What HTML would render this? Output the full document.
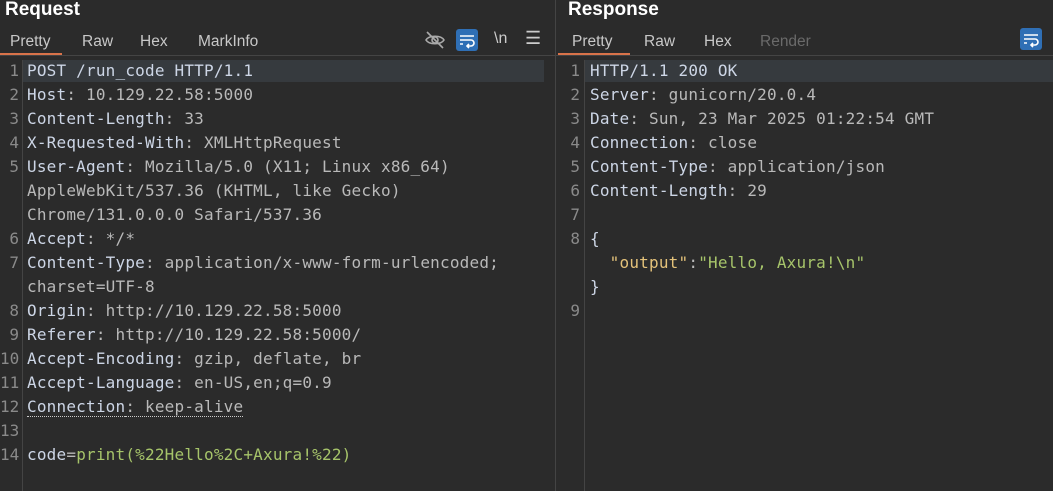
<!DOCTYPE html>
<html><head><style>
body{margin:0;width:1053px;height:491px;background:#2b2b2b;overflow:hidden;font-family:"Liberation Sans",sans-serif;color:#ddd;position:relative}
.panel{position:absolute;top:0;height:491px}
.title{position:absolute;top:-1px;font-weight:bold;font-size:19px;color:#fff}
.tabs{position:absolute;top:33px;font-size:15.5px;color:#c8c8c8}
.tabs span{position:absolute;white-space:nowrap}
.sep{position:absolute;top:55px;height:1px;background:#444}
.ul{position:absolute;top:53px;height:2px;background:#d9734a}
.code{position:absolute;font-family:"DejaVu Sans Mono",monospace;font-size:16px;letter-spacing:0.2px;line-height:24px;white-space:pre;color:#b9b9b9}
.ln{position:absolute;font-family:"DejaVu Sans Mono",monospace;font-size:16px;line-height:24px;color:#8a8a8a;text-align:right;white-space:pre}
.k{color:#cdd6e6}.g{color:#a6c46a}.y{color:#e4c27a}
.gut{position:absolute;top:60px;width:1px;height:431px;background:#444}
.ic{position:absolute}
</style></head><body>
<div class="panel" style="left:0;width:555px">
<div class="title" style="left:5px">Request</div>
<div class="tabs"><span style="left:10px">Pretty</span><span style="left:82px">Raw</span><span style="left:140px">Hex</span><span style="left:198px">MarkInfo</span></div>
<div class="sep" style="left:0;width:555px"></div>
<div class="ul" style="left:0;width:62px"></div>
<svg class="ic" style="left:424px;top:29px" width="22" height="22" viewBox="0 0 22 22" fill="none" stroke="#aaa" stroke-width="1.6"><path d="M2 11c3-5 15-5 18 0c-3 5-15 5-18 0z"/><circle cx="11" cy="11" r="3"/><path d="M3 3l16 16"/></svg>
<div class="ic" style="left:456px;top:29px;width:22px;height:22px;background:#2f6fb5;border-radius:3px"></div>
<svg class="ic" style="left:456px;top:29px" width="22" height="22" viewBox="0 0 22 22" fill="none" stroke="#fff" stroke-width="1.6"><path d="M4 7h14M4 11h11a3 3 0 0 1 0 6h-4M13 15l-2 2 2 2M4 15h3"/></svg>
<div class="ic" style="left:494px;top:30px;font-size:16px;color:#ccc">\n</div>
<div class="ic" style="left:525px;top:28px;font-size:18px;color:#ccc">☰</div>
<div style="position:absolute;left:23px;top:60px;width:521px;height:22px;background:#363a3e"></div>
<div class="gut" style="left:22px"></div>
<div class="ln" style="left:0;top:59px;width:19px">1
2
3
4
5


6
7

8
9
10
11
12
13
14</div>
<div class="code" style="left:27px;top:59px"><span class="k">POST /run_code HTTP/1.1</span>
<span class="k">Host</span>: 10.129.22.58:5000
<span class="k">Content-Length</span>: 33
<span class="k">X-Requested-With</span>: XMLHttpRequest
<span class="k">User-Agent</span>: Mozilla/5.0 (X11; Linux x86_64)
AppleWebKit/537.36 (KHTML, like Gecko)
Chrome/131.0.0.0 Safari/537.36
<span class="k">Accept</span>: */*
<span class="k">Content-Type</span>: application/x-www-form-urlencoded;
charset=UTF-8
<span class="k">Origin</span>: http://10.129.22.58:5000
<span class="k">Referer</span>: http://10.129.22.58:5000/
<span class="k">Accept-Encoding</span>: gzip, deflate, br
<span class="k">Accept-Language</span>: en-US,en;q=0.9
<span class="k" style="border-bottom:1px dotted #ccc">Connection</span><span style="border-bottom:1px dotted #ccc">: keep-alive</span>

<span class="k">code</span>=<span class="g">print(%22Hello%2C+Axura!%22)</span></div>
</div>
<div style="position:absolute;left:555px;top:0;width:1px;height:491px;background:#444"></div>
<div class="panel" style="left:556px;width:497px">
<div class="title" style="left:12px">Response</div>
<div class="tabs"><span style="left:16px">Pretty</span><span style="left:88px">Raw</span><span style="left:148px">Hex</span><span style="left:204px;color:#6a6a6a">Render</span></div>
<div class="sep" style="left:0;width:497px"></div>
<div class="ul" style="left:2px;width:72px"></div>
<div class="ic" style="left:464px;top:28px;width:22px;height:22px;background:#2f6fb5;border-radius:3px"></div>
<svg class="ic" style="left:464px;top:28px" width="22" height="22" viewBox="0 0 22 22" fill="none" stroke="#fff" stroke-width="1.6"><path d="M4 7h14M4 11h11a3 3 0 0 1 0 6h-4M13 15l-2 2 2 2M4 15h3"/></svg>
<div style="position:absolute;left:29px;top:60px;width:468px;height:22px;background:#363a3e"></div>
<div class="gut" style="left:28px"></div>
<div class="ln" style="left:0;top:59px;width:24px">1
2
3
4
5
6
7
8


9</div>
<div class="code" style="left:34px;top:59px"><span class="k">HTTP/1.1 200 OK</span>
<span class="k">Server</span>: gunicorn/20.0.4
<span class="k">Date</span>: Sun, 23 Mar 2025 01:22:54 GMT
<span class="k">Connection</span>: close
<span class="k">Content-Type</span>: application/json
<span class="k">Content-Length</span>: 29

<span class="k">{</span>
  <span class="y">"output"</span>:<span class="g">"Hello, Axura!\n"</span>
<span class="k">}</span></div>
</div>
</body></html>
